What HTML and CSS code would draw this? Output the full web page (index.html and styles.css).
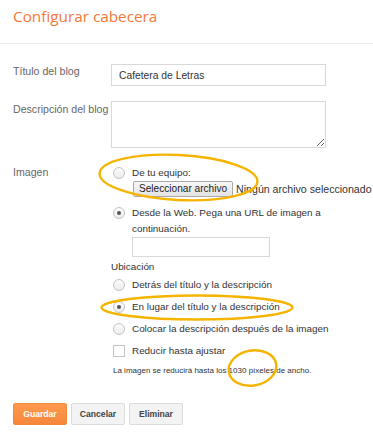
FILE: index.html
```html
<!DOCTYPE html>
<html lang="es">
<head>
<meta charset="utf-8">
<title>Configurar cabecera</title>
<link rel="stylesheet" href="styles.css">
</head>
<body>
<header class="head">
  <h1 class="head-title">Configurar cabecera</h1>
</header>
<main class="form">
  <div class="row row-title">
    <label class="lbl">Título del blog</label>
    <input class="text" type="text" value="Cafetera de Letras">
  </div>
  <div class="row row-desc">
    <label class="lbl lbl-desc">Descripción del blog</label>
    <textarea class="area"></textarea>
  </div>
  <div class="row row-img">
    <label class="lbl">Imagen</label>
    <div class="opts">
      <div class="opt opt-first"><span class="radio"></span><span class="opt-text">De tu equipo:</span></div>
      <div class="file"><span class="file-btn">Seleccionar archivo</span><span class="file-none">Ningún archivo seleccionado</span></div>
      <div class="opt opt-web"><span class="radio on"></span><span class="opt-text wrap">Desde la Web. Pega una URL de imagen a continuación.</span></div>
      <div class="url-line"><span class="url"></span></div>
      <div class="sub">Ubicación</div>
      <div class="opt opt-loc opt-loc-first"><span class="radio"></span><span class="opt-text">Detrás del título y la descripción</span></div>
      <div class="opt opt-loc"><span class="radio on"></span><span class="opt-text">En lugar del título y la descripción</span></div>
      <div class="opt opt-loc"><span class="radio"></span><span class="opt-text">Colocar la descripción después de la imagen</span></div>
      <div class="opt opt-loc"><span class="check"></span><span class="opt-text">Reducir hasta ajustar</span></div>
      <div class="note">La imagen se reducirá hasta los 1030 píxeles de ancho.</div>
    </div>
  </div>
</main>
<footer class="actions">
  <button class="btn btn-primary">Guardar</button>
  <button class="btn">Cancelar</button>
  <button class="btn">Eliminar</button>
</footer>
<svg class="marks" width="373" height="434" viewBox="0 0 373 434">
  <ellipse cx="178.5" cy="177.5" rx="79" ry="22.5" transform="rotate(3 178.5 177.5)"/>
  <ellipse cx="197" cy="307.5" rx="95.5" ry="12"/>
  <ellipse cx="252.5" cy="368" rx="24" ry="17.5" transform="rotate(-10 252.5 368)"/>
</svg>
</body>
</html>
```
FILE: styles.css
```css
* { box-sizing: border-box; }
html, body { margin: 0; padding: 0; background: #fff; }
body {
  width: 373px;
  height: 434px;
  overflow: hidden;
  position: relative;
  font-family: "Liberation Sans", Arial, sans-serif;
  font-size: 10.6px;
  color: #333;
}
.head {
  height: 44px;
  border-bottom: 1px solid #ebebeb;
  padding: 4px 0 0 13px;
}
.head-title {
  margin: 0;
  font-family: "Open Sans", sans-serif;
  font-weight: 400;
  font-size: 15.3px;
  line-height: 24px;
  color: #f6773a;
}
.row {
  display: grid;
  grid-template-columns: 98px 215px;
  padding-left: 13px;
}
.lbl {
  color: #666;
  line-height: 14px;
  white-space: nowrap;
}
.row-title { margin-top: 20px; }
.text {
  display: block;
  width: 215px;
  height: 22px;
  margin: 0;
  border: 1px solid #d9d9d9;
  padding: 0 7px;
  font-family: inherit;
  font-size: 10.3px;
  color: #333;
  outline: none;
}
.row-desc { margin-top: 15px; }
.lbl-desc { padding-top: 1px; }
.area {
  display: block;
  width: 215px;
  height: 47px;
  margin: 0;
  border: 1px solid #d9d9d9;
  font: inherit;
  outline: none;
}
.row-img { margin-top: 17px; }
.opts { display: flex; flex-direction: column; }
.opt {
  display: flex;
  align-items: center;
  height: 16px;
  line-height: 16px;
  padding-left: 2px;
  font-size: 9.9px;
}
.opt-text { margin-left: 7px; white-space: nowrap; color: #333; }
.radio {
  flex: none;
  width: 12px;
  height: 12px;
  border-radius: 50%;
  border: 1px solid #c4c4c4;
  background: linear-gradient(#fbfbfb, #ececec);
  display: flex;
  align-items: center;
  justify-content: center;
}
.radio.on::after {
  content: "";
  width: 4px;
  height: 4px;
  border-radius: 50%;
  background: #555;
}
.check {
  flex: none;
  width: 12px;
  height: 12px;
  border: 1px solid #c4c4c4;
  background: #fff;
}
.file {
  display: flex;
  align-items: center;
  height: 16px;
  padding-left: 22px;
  white-space: nowrap;
}
.file-btn {
  height: 16px;
  line-height: 14px;
  padding: 0 5px;
  border: 1px solid #a9a9a9;
  border-radius: 2px;
  background: linear-gradient(#f7f7f7, #e3e3e3);
  font-size: 10.1px;
  color: #222;
}
.file-none { margin-left: 3px; color: #333; }
.opt-web {
  margin-top: 8px;
  height: 32px;
  align-items: flex-start;
}
.opt-web .radio { margin-top: 2px; }
.wrap { white-space: normal; flex: none; width: 200px; }
.url-line { padding-left: 21px; }
.url {
  display: block;
  width: 138px;
  height: 20px;
  border: 1px solid #d9d9d9;
}
.sub {
  margin-top: 2px;
  line-height: 16px;
  font-size: 9.9px;
  color: #333;
}
.opt-loc { margin-top: 6px; }
.opt-loc-first { margin-top: 2px; }
.note {
  margin-top: 7px;
  padding-left: 2px;
  font-size: 8px;
  line-height: 10px;
  color: #333;
  white-space: nowrap;
}
.actions {
  display: flex;
  gap: 4px;
  padding-left: 13px;
  margin-top: 27px;
}
.btn {
  width: 54px;
  height: 22px;
  padding: 0;
  margin: 0;
  border: 1px solid #dcdcdc;
  border-radius: 2px;
  background: #f3f3f3;
  font-family: "Liberation Sans", Arial, sans-serif;
  font-size: 8.6px;
  font-weight: bold;
  color: #444;
}
.btn-primary {
  border-color: #f4883d;
  background: linear-gradient(#fd9a4e, #f7873a);
  color: #fff;
}
.marks {
  position: absolute;
  left: 0;
  top: 0;
  pointer-events: none;
}
.marks ellipse {
  fill: none;
  stroke: #f5b400;
  stroke-width: 2.4;
}
```
